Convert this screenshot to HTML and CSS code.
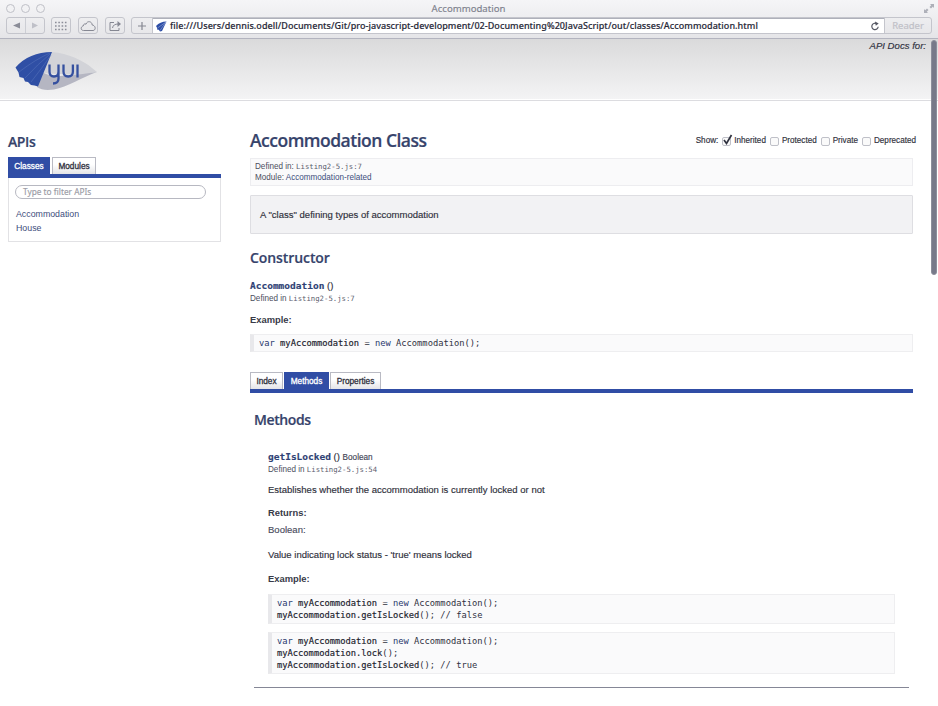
FILE: index.html
```html
<!DOCTYPE html>
<html lang="en">
<head>
<meta charset="utf-8">
<title>Accommodation</title>
<link rel="stylesheet" href="styles.css">
</head>
<body>
<div class="chrome">
  <div class="titlebar">
    <div class="lights"><i></i><i></i><i></i></div>
    <span class="window-title">Accommodation</span>
    <svg class="expand" width="12" height="11" viewBox="0 0 12 11"><path d="M7 1h4v4L9.800 3.800 8 5.500 6.500 4 8.200 2.200zM1 10h4L3.800 8.800 5.500 7 4 5.500 2.200 7.200 1 6z" fill="#aeb0b9"/></svg>
  </div>
  <div class="toolbar">
    <div class="btn nav"><svg width="38" height="15" viewBox="0 0 38 15"><path d="M13 4.500v6L6 7.500z" fill="#8b8d98"/><path d="M25 4.500v6l6-3z" fill="#bfc0c8"/><path d="M18.500 0v15" stroke="#ccced4"/></svg></div>
    <div class="btn"><svg width="18" height="15" viewBox="1 0 18 15"><path d="M4 4.500h12M4 8h12M4 11.500h12" stroke="#8b8d98" stroke-width="1.600" stroke-dasharray="1.600 1.700"/></svg></div>
    <div class="btn"><svg width="18" height="15" viewBox="1 0 18 15"><path d="M5.500 12.500C2.500 12.500 2.500 8.500 5.200 8 5.200 6 7 5.600 8 6.200 9 2.500 14 3 14.200 7 18 7.500 18 12.500 15 12.500z" fill="none" stroke="#858792"/></svg></div>
    <div class="btn"><svg width="18" height="15" viewBox="1 0 18 15"><path d="M9 4.500H5v8h9V10M7.500 10C8 7 10 6 13.500 6" fill="none" stroke="#858792"/><path d="M12.500 3v6l3.500-3z" fill="#858792"/></svg></div>
    <div class="address">
      <div class="plus"><svg width="20" height="15" viewBox="0 0 20 15"><path d="M6 8h8M10 4v8" stroke="#858792" stroke-width="1.200"/></svg></div>
      <div class="url-field">
        <svg width="14" height="13" viewBox="0 0 14 13"><path d="M2 6Q6 1.500 12.500 1.500L8 11 6 11.500 4.800 9.700 3.300 9.700 3 7.700z" fill="#2d4ea6"/><path d="M12 2L3.500 8M12 2L6 10.500" stroke="#aebbe0" stroke-width=".5"/></svg>
        <span class="url">file:///Users/dennis.odell/Documents/Git/pro-javascript-development/02-Documenting%20JavaScript/out/classes/Accommodation.html</span>
        <svg class="reload" width="10" height="11" viewBox="0 0 10 11"><path d="M6.500 2.600A3.200 3.200 0 1 0 8.200 5.800" fill="none" stroke="#555763" stroke-width="1.200"/><path d="M5 .5L8.700 2.400 5.800 4.800z" fill="#555763"/></svg>
      </div>
      <div class="reader">Reader</div>
    </div>
  </div>
</div>
<header class="masthead">
  <svg class="logo" width="100" height="52" viewBox="0 0 100 52">
    <path d="M52 13C68 14 84 22 92 29L97 33 80 36 40 34z" fill="#d2d3d8"/>
    <path d="M42 33C52 40 76 36 97 33 83 38 67 48 54 50.500 47 51.500 41 51 37 48z" fill="#b5b6c2"/>
    <path d="M15.500 28.500Q29 13 52 13L38 47.500 34.500 46.500 31 46 28 43 25 42.500 23.500 39 19.500 38 18.500 33.500z" fill="#2f4fa5"/>
    <path d="M50 14Q36 20 19 33M50 15Q38 25 25 39M51 16Q42 29 31 43" fill="none" stroke="#5b76bc" stroke-width=".5"/>
    <path d="M49.500 25.500v7q0 5 4.500 5t4.500-5v-7M58.500 32v7.500q0 5-5.500 5M63.500 25.500v7q0 5 4.700 5t4.700-5v-7M77.500 25.500v13" fill="none" stroke="#35509f" stroke-width="2.300"/>
  </svg>
  <em>API Docs for:</em>
</header>
<div class="page">
  <aside>
    <h2 class="apis">APIs</h2>
    <div class="tabs side-tabs"><span class="tab on">Classes</span><span class="tab">Modules</span></div>
    <div class="api-list">
      <div class="filter">Type to filter APIs</div>
      <a>Accommodation</a>
      <a>House</a>
    </div>
  </aside>
  <main>
    <div class="title-row">
      <h1>Accommodation Class</h1>
      <div class="show"><span>Show:</span>
        <i class="box"><svg width="11" height="12" viewBox="0 0 11 12"><path d="M2 6l2.500 3.500L9.500 1" fill="none" stroke="#30323f" stroke-width="1.700"/></svg></i><span>Inherited</span>
        <i class="box"></i><span>Protected</span>
        <i class="box"></i><span>Private</span>
        <i class="box"></i><span>Deprecated</span>
      </div>
    </div>
    <div class="meta"><div>Defined in: <code>Listing2-5.js:7</code></div><div>Module: <a>Accommodation-related</a></div></div>
    <div class="description">A "class" defining types of accommodation</div>
    <h2 class="constructor">Constructor</h2>
    <div class="signature"><b>Accommodation</b> ()</div>
    <div class="defined">Defined in <code>Listing2-5.js:7</code></div>
    <h3 class="example-one">Example:</h3>
    <pre class="single"><i>var</i> <b>myAccommodation</b> = <i>new</i> Accommodation();</pre>
    <div class="tabs main-tabs"><span class="tab">Index</span><span class="tab on">Methods</span><span class="tab">Properties</span></div>
    <section>
      <h2 class="methods">Methods</h2>
      <article>
        <div class="signature"><b>getIsLocked</b> () <small>Boolean</small></div>
        <div class="defined">Defined in <code>Listing2-5.js:54</code></div>
        <p class="summary">Establishes whether the accommodation is currently locked or not</p>
        <h3 class="returns">Returns:</h3>
        <p class="type">Boolean:</p>
        <p class="value">Value indicating lock status - 'true' means locked</p>
        <h3 class="example-two">Example:</h3>
        <pre><i>var</i> <b>myAccommodation</b> = <i>new</i> Accommodation();
<b>myAccommodation.getIsLocked</b>(); // false</pre>
        <pre><i>var</i> <b>myAccommodation</b> = <i>new</i> Accommodation();
<b>myAccommodation.lock</b>();
<b>myAccommodation.getIsLocked</b>(); // true</pre>
      </article>
      <hr>
    </section>
  </main>
</div>
<div class="scrollbar"></div>
</body>
</html>
```

FILE: styles.css
```css
* { box-sizing: border-box; }
body { margin: 0; width: 938px; height: 706px; overflow: hidden; position: relative; background: #fff; color: #2f303b; font: 9.52px/12px "Liberation Sans", Arial, sans-serif; -webkit-text-stroke: .15px; }
h1, h2, h3, p, pre { margin: 0; }
svg { display: block; flex: none; }
i { font-style: normal; }
code, pre, .signature b { font-family: "DejaVu Sans Mono", monospace; }

.chrome { height: 39px; background: linear-gradient(#f5f5f7, #e5e5e8); border-bottom: 1px solid #b3b4bf; }
.titlebar { height: 17px; display: grid; grid-template-columns: 1fr auto 1fr; align-items: center; padding: 0 3px 0 6px; }
.lights { display: flex; gap: 6px; }
.lights i { width: 9px; height: 9px; border: 1px solid #bfc0c7; border-radius: 50%; background: #f2f2f4; }
.window-title { font: 9.6px/16px "Noto Sans", sans-serif; color: #80828e; margin-left: -4px; }
.expand { justify-self: end; }
.toolbar { display: flex; padding: 0 6px; }
.btn { height: 17px; border: 1px solid #c4c5cc; border-radius: 3px; overflow: hidden; margin-right: 7px; width: 20px; }
.nav { width: 39px; margin-right: 6px; }
.address { display: flex; flex: 1; height: 17px; border: 1px solid #c4c5cc; border-radius: 3px; margin-left: -1px; }
.plus { width: 21px; border-right: 1px solid #c4c5cc; }
.url-field { flex: 1; display: flex; align-items: center; background: #fff; border-top: 1px solid #aeb0ba; padding-left: 1px; }
.url { flex: 1; margin-left: 2px; white-space: nowrap; font: 500 9px/14px "Noto Sans", sans-serif; letter-spacing: .055px; color: #292a39; }
.reload { margin-right: 4px; }
.reader { width: 47px; border-left: 1px solid #c4c5cc; text-align: center; font: 9.5px/16px "Noto Sans", sans-serif; color: #bfc0c7; }

.masthead { height: 62px; display: flex; justify-content: space-between; background: linear-gradient(#dadadb, #f4f4f5); border-bottom: 1px solid #dcdce0; box-shadow: inset 0 -1px #fff; padding-right: 12px; }
.masthead em { font-size: 9.6px; line-height: 13px; color: #30313e; }

.page { display: flex; padding-left: 8px; }
aside { width: 213px; margin-right: 29px; padding-top: 31px; }
h1, h2 { font-family: "Open Sans", sans-serif; font-weight: 600; color: #36436b; -webkit-text-stroke: .2px; }
.apis { font-size: 14px; line-height: 20px; height: 25px; letter-spacing: -.4px; }
.tabs { display: flex; gap: 2px; border-bottom: 4px solid #304da5; }
.tab { height: 17px; padding: 0; border: 1px solid #b9bac3; border-bottom: 0; background: linear-gradient(#fff 40%, #e4e4e7); color: #30313d; font-size: 8.25px; line-height: 17px; text-align: center; -webkit-text-stroke: .3px; }
.tab.on { background: #304da5; border-color: #304da5; color: #fff; }
.side-tabs .tab { width: 44px; }
.side-tabs .on { width: 42px; }
.api-list { height: 64px; border: 1px solid #e2e2e5; border-top: 0; padding: 7px 7px 0 6px; }
.filter { width: 191px; height: 14px; border: 1px solid #b7b8c1; border-radius: 7px; padding-left: 7px; font: 8.3px/12px "Noto Sans", sans-serif; color: #9b9ca6; margin-bottom: 9px; }
.api-list a { display: block; height: 14px; padding-left: 1px; font-size: 8.8px; line-height: 12px; color: #404e7c; -webkit-text-stroke: 0; }

main { width: 663px; padding-top: 25px; }
.title-row { display: flex; justify-content: space-between; height: 32px; margin-right: -3px; }
h1 { font-size: 17.5px; line-height: 28px; letter-spacing: -.5px; white-space: nowrap; }
.show { display: flex; align-items: center; height: 30px; font-size: 8.15px; white-space: nowrap; }
.box { width: 9px; height: 9px; border: 1px solid #bfc0c8; border-radius: 2px; margin: 0 3px 0 4px; background: #fafafa; }
.box svg { margin: -4px 0 0 -1px; }
.meta { height: 28px; border: 1px solid #ededf0; background: #fafafb; padding: 2px 4px; font-size: 8.15px; line-height: 11px; color: #4c4e5e; -webkit-text-stroke: 0; }
code { font-size: 7.3px; color: #5a5c6d; -webkit-text-stroke: 0; }
.meta a { color: #404e7c; }
.description { height: 39px; margin-top: 9px; border: 1px solid #dedee2; background: #f2f2f4; border-radius: 1px; padding: 0 9px; line-height: 37px; }
.constructor, .methods { font-size: 14px; line-height: 20px; }
.constructor { margin-top: 14px; height: 31px; letter-spacing: -.08px; }
.signature { height: 13px; line-height: 13px; white-space: nowrap; }
.signature b { font-size: 9.5px; color: #2f4275; }
.signature small { font-size: 8.2px; color: #444657; }
.defined { height: 11px; line-height: 13px; font-size: 8.15px; color: #4c4e5e; -webkit-text-stroke: 0; }
h3 { font-size: 9.4px; line-height: 12px; font-weight: 700; color: #383a48; -webkit-text-stroke: 0; }
.example-one { margin: 11px 0 8px; }
pre { border: 1px solid #eeeef0; border-left: 4px solid #e8e8eb; background: #fafafb; padding: 2px 5px; font-size: 8.76px; line-height: 12px; color: #30313f; -webkit-text-stroke: 0; }
pre b { font-weight: 400; color: #20212c; -webkit-text-stroke: .15px; }
pre i { color: #28386d; }
.single { height: 18px; }
.main-tabs { margin-top: 20px; gap: 1px; }
.main-tabs .tab:nth-child(1) { width: 33px; }
.main-tabs .tab:nth-child(2) { width: 45px; }
.main-tabs .tab:nth-child(3) { width: 51px; }
section { padding: 17px 4px 0; }
.methods { height: 40px; letter-spacing: -.4px; }
article { padding: 0 14px; }
.summary { margin-top: 10px; }
.returns { margin-top: 11px; }
.type { margin-top: 5px; color: #4a4c5e; }
.value { margin-top: 13px; }
.example-two { margin: 12px 0 9px; }
article pre + pre { margin-top: 8px; }
hr { height: 1px; margin: 13px 0 0; border: 0; background: #858796; }
.scrollbar { position: absolute; left: 931px; top: 40px; width: 6px; height: 235px; border-radius: 3px; background: #777989; border: 1px solid #8c8e9b; }
```
